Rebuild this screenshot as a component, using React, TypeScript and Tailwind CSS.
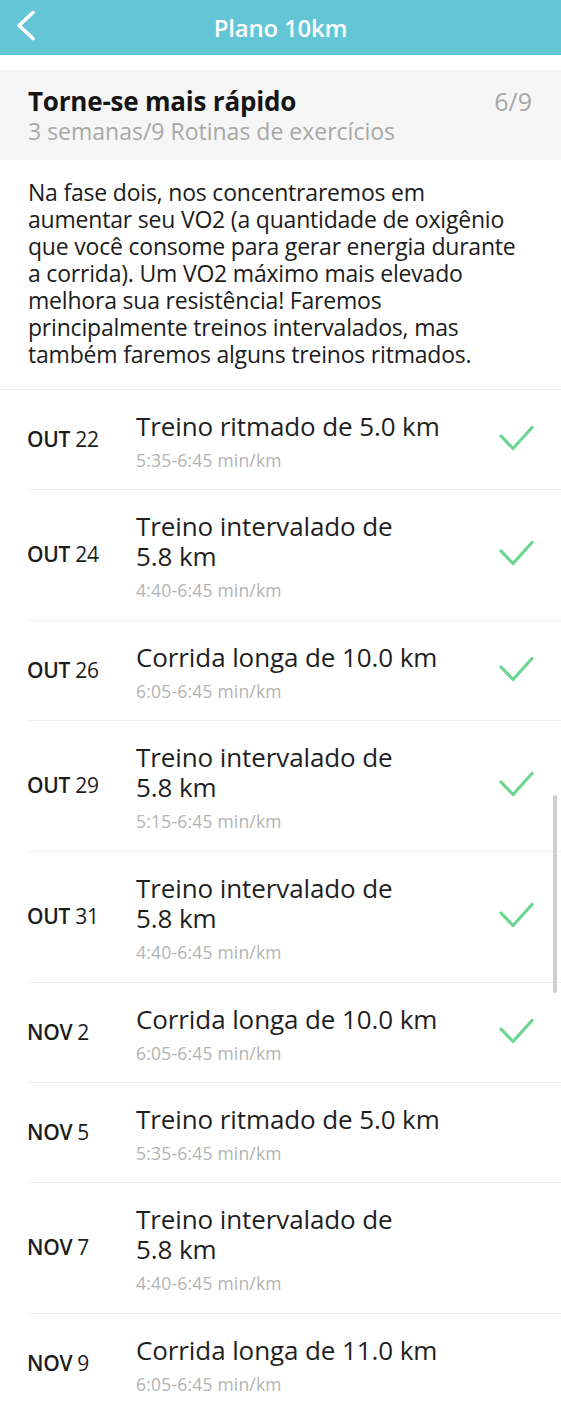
import React from "react";

type Workout = {
  month: string;
  day: string;
  title: string[];
  pace: string;
  done: boolean;
};

const workouts: Workout[] = [
  { month: "OUT", day: "22", title: ["Treino ritmado de 5.0 km"], pace: "5:35-6:45 min/km", done: true },
  { month: "OUT", day: "24", title: ["Treino intervalado de", "5.8 km"], pace: "4:40-6:45 min/km", done: true },
  { month: "OUT", day: "26", title: ["Corrida longa de 10.0 km"], pace: "6:05-6:45 min/km", done: true },
  { month: "OUT", day: "29", title: ["Treino intervalado de", "5.8 km"], pace: "5:15-6:45 min/km", done: true },
  { month: "OUT", day: "31", title: ["Treino intervalado de", "5.8 km"], pace: "4:40-6:45 min/km", done: true },
  { month: "NOV", day: "2", title: ["Corrida longa de 10.0 km"], pace: "6:05-6:45 min/km", done: true },
  { month: "NOV", day: "5", title: ["Treino ritmado de 5.0 km"], pace: "5:35-6:45 min/km", done: false },
  { month: "NOV", day: "7", title: ["Treino intervalado de", "5.8 km"], pace: "4:40-6:45 min/km", done: false },
  { month: "NOV", day: "9", title: ["Corrida longa de 11.0 km"], pace: "6:05-6:45 min/km", done: false },
];

function CheckMark() {
  return (
    <svg width="36" height="30" viewBox="0 0 36 30" fill="none">
      <path
        d="M3 11 L15 23.5 L34 2.5"
        stroke="#6bd68f"
        strokeWidth="3.2"
        strokeLinecap="round"
        strokeLinejoin="round"
      />
    </svg>
  );
}

function WorkoutRow({ w }: { w: Workout }) {
  return (
    <div className="flex items-center border-b border-[#efefef] ml-[27px] pr-[27px]">
      <div className="w-[109px] shrink-0 text-[21px] text-[#1c1c1c] tracking-[-0.3px]">
        <span className="font-semibold">{w.month}</span> <span>{w.day}</span>
      </div>
      <div className={w.title.length > 1 ? "flex-1 pt-[21px] pb-[19px]" : "flex-1 pt-[21px] pb-[18px]"}>
        {w.title.map((t, i) => (
          <p key={i} className="text-[26px] leading-[30px] text-[#1f1f1f] tracking-[-0.1px]">
            {t}
          </p>
        ))}
        <p className="mt-[8px] text-[17.5px] leading-[22px] text-[#b3b3b3] tracking-[0.2px]">{w.pace}</p>
      </div>
      <div className="w-[40px] flex justify-end">{w.done && <CheckMark />}</div>
    </div>
  );
}

export default function App() {
  return (
    <div className="relative w-[561px] min-h-[1401px] bg-white font-['Open_Sans',sans-serif] overflow-hidden">
      <div className="h-[55px] bg-[#63c5d5] flex items-center justify-center relative">
        <svg
          className="absolute left-[14px] top-[10px]"
          width="24"
          height="32"
          viewBox="0 0 24 32"
          fill="none"
        >
          <path d="M19 2.5 L5 15.5 L19 28.5" stroke="white" strokeWidth="3.6" strokeLinecap="round" strokeLinejoin="round" />
        </svg>
        <h1 className="text-white text-[24px] font-semibold tracking-[-0.2px]">Plano 10km</h1>
      </div>

      <div className="h-[15px]" />

      <div className="bg-[#f6f6f6] h-[90px] pl-[28px] pr-[29px] pt-[15px] flex justify-between">
        <div>
          <h2 className="text-[26px] leading-[32px] font-bold text-[#151515] tracking-[-0.2px]">
            Torne-se mais rápido
          </h2>
          <p className="text-[23px] leading-[28px] text-[#a8a8a8]">
            3 semanas/9 Rotinas de exercícios
          </p>
        </div>
        <span className="text-[25px] leading-[32px] text-[#a8a8a8]">6/9</span>
      </div>

      <div className="px-[28px] pt-[19px] pb-[21px] border-b border-[#efefef]">
        <p className="text-[23px] leading-[27px] text-[#1c1c1c] tracking-[-0.2px]">
          Na fase dois, nos concentraremos em aumentar seu VO2 (a quantidade de oxigênio que você
          consome para gerar energia durante a corrida). Um VO2 máximo mais elevado melhora sua
          resistência! Faremos principalmente treinos intervalados, mas também faremos alguns treinos
          ritmados.
        </p>
      </div>

      <div>
        {workouts.map((w, i) => (
          <WorkoutRow key={i} w={w} />
        ))}
      </div>

      <div className="absolute left-[553px] top-[795px] w-[4px] h-[198px] rounded-full bg-[#cfcfcf]" />
    </div>
  );
}
